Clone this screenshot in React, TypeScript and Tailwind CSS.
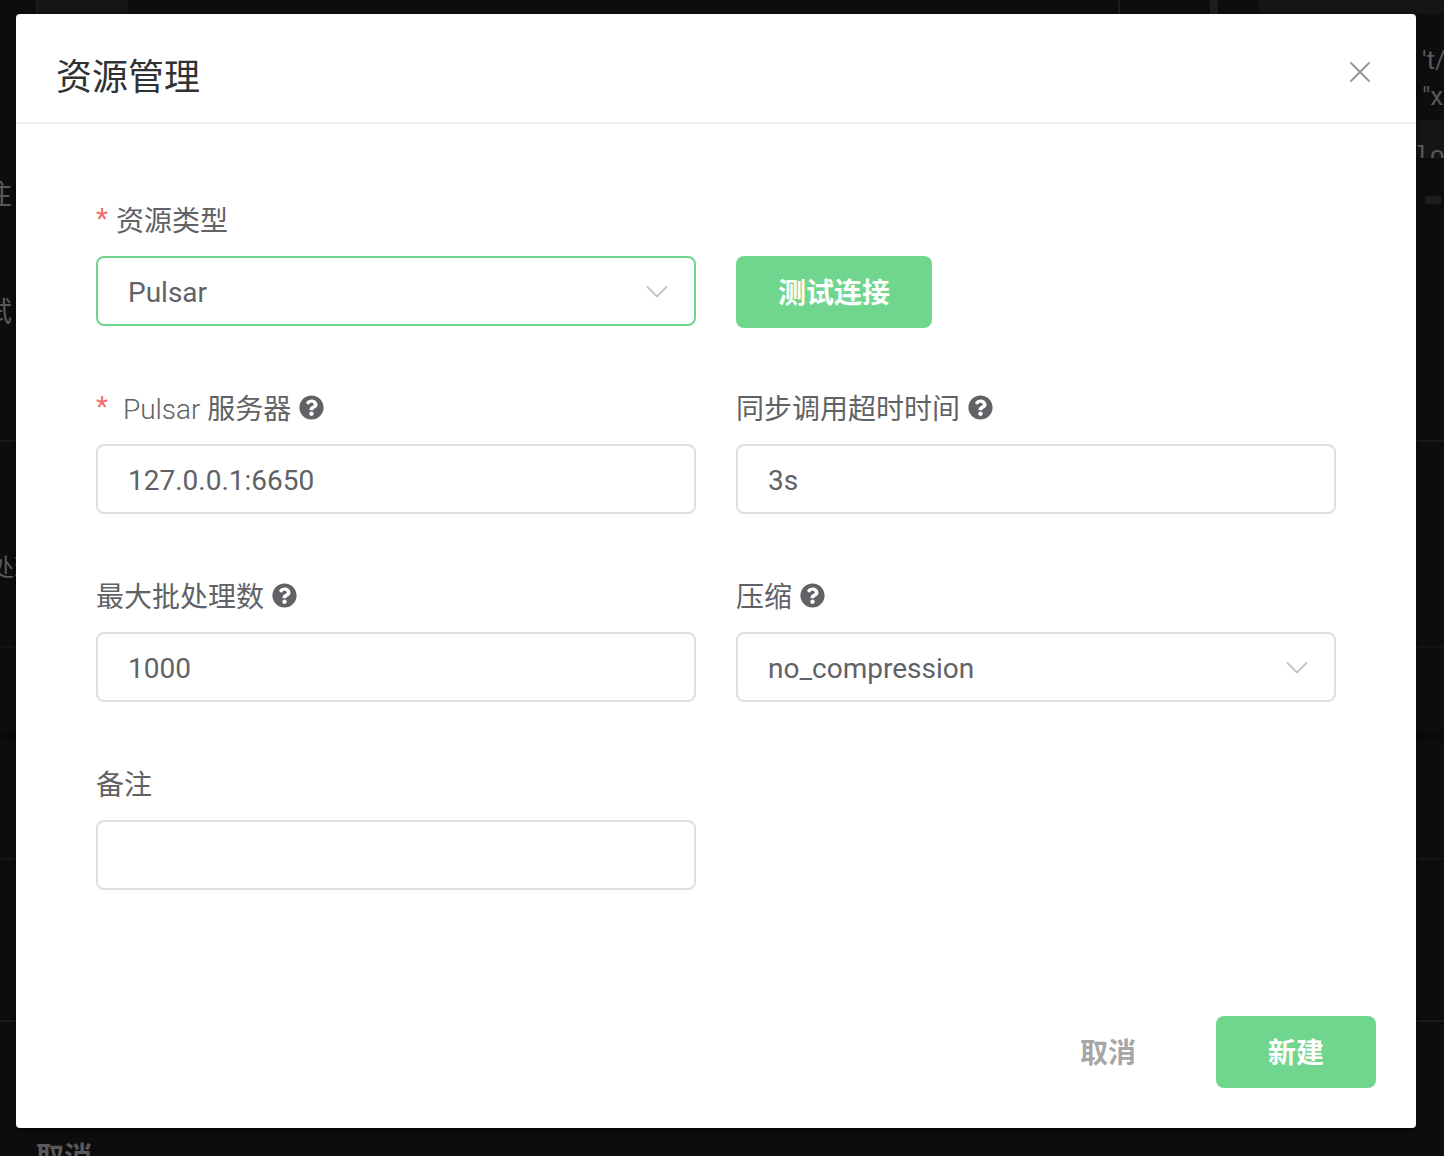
import React, { useState } from "react";
import { FaQuestionCircle } from "react-icons/fa";

const fieldStyle =
  "h-[70px] w-full appearance-none rounded-lg border-2 bg-white px-[30px] text-[28px] text-[#606266] outline-none";

type LabelProps = {
  htmlFor: string;
  required?: boolean;
  help?: boolean;
  children: React.ReactNode;
};

const Label = ({ htmlFor, required, help, children }: LabelProps) => (
  <div className="flex h-10 items-center gap-2">
    <label htmlFor={htmlFor} className="flex items-center gap-2 whitespace-pre">
      {required && <span className="pb-0.5 text-[#f56c6c]">*</span>}
      <span className="pt-1">{children}</span>
    </label>
    {help && <FaQuestionCircle className="mb-0.5" size={25} aria-hidden="true" />}
  </div>
);

type SelectProps = {
  id: string;
  options: string[];
  active?: boolean;
};

const Select = ({ id, options, active }: SelectProps) => {
  const [value, setValue] = useState(options[0]);

  return (
    <div className="relative">
      <select
        id={id}
        value={value}
        onChange={(e) => setValue(e.target.value)}
        className={`${fieldStyle} pt-1 ${active ? "border-[#71d68d]" : "border-[#dcdfe6]"}`}
      >
        {options.map((option) => (
          <option key={option}>{option}</option>
        ))}
      </select>
      <svg
        className="pointer-events-none absolute right-7 top-[30px]"
        width="22"
        height="12"
        viewBox="0 0 22 12"
        fill="none"
        aria-hidden="true"
      >
        <path
          d="M1.5 1L11 10.5L20.5 1"
          stroke="#c0c4cc"
          strokeWidth="1.8"
          strokeLinecap="round"
          strokeLinejoin="round"
        />
      </svg>
    </div>
  );
};

// Dimmed page that stays visible around the dialog
const Backdrop = () => (
  <div
    className="absolute inset-0 flex flex-col overflow-hidden text-[28px] leading-9 text-[#58595b]"
    aria-hidden="true"
  >
    <div className="flex h-[442px] shrink-0 justify-between border-b-2 border-[#1a1a1a]">
      <div className="-ml-4 flex flex-col">
        <div className="ml-[52px] h-3.5 w-[92px] border-l-2 border-[#1d1d1f] bg-[#151518]" />
        <span className="mt-[164px]">注</span>
        <span className="mt-[81px]">试</span>
      </div>
      <div className="flex">
        <div className="mr-[90px] h-3.5 w-0.5 bg-[#1d1d1f]" />
        <div className="mr-10 h-3.5 w-2 bg-[#1d1d1f]" />
        <div className="flex w-[186px] flex-col">
          <div className="h-3.5 rounded-bl-lg bg-[#151518]" />
          <span className="ml-[164px] mt-7 whitespace-nowrap text-[26px]">'t/</span>
          <span className="ml-[164px] whitespace-nowrap text-[26px]">"x"</span>
          <div className="mt-1.5 h-[38px] overflow-hidden bg-[#151518] pl-[156px] pt-[19px] font-['Liberation_Mono'] text-[26px]">
            log
          </div>
          <div className="mt-[38px] ml-[167px] h-2 w-4 bg-[#1d1d1f]" />
        </div>
      </div>
    </div>
    <div className="h-[206px] shrink-0 border-b-2 border-[#151515] pt-[107px]">
      <span className="-ml-2.5 text-2xl leading-9">处理</span>
    </div>
    <div className="h-[90px] shrink-0 border-b-4 border-[#0a0a0a]" />
    <div className="h-[122px] shrink-0 border-b-2 border-[#151515]" />
    <div className="h-[162px] shrink-0 border-b-2 border-[#1a1a1a]" />
    <div className="pl-9 pt-[118px] font-bold">取消</div>
  </div>
);

const App = () => {
  const [server, setServer] = useState("127.0.0.1:6650");
  const [timeout, setTimeoutValue] = useState("3s");
  const [batchSize, setBatchSize] = useState("1000");
  const [remark, setRemark] = useState("");

  return (
    <main className="relative min-h-screen bg-[#0d0d0d] pb-7 pl-4 pr-7 pt-3.5 font-[Roboto,'Noto_Sans_CJK_SC',sans-serif]">
      <Backdrop />
      <section
        role="dialog"
        aria-labelledby="dialog-title"
        className="relative rounded bg-white text-[28px] text-[#606266] shadow-[0_2px_6px_rgba(0,0,0,0.5)]"
      >
        <header className="flex items-center justify-between border-b-2 border-[#f0f0f0] px-10 pb-[18px] pt-[38px]">
          <h2 id="dialog-title" className="text-4xl leading-[52px] text-[#303133]">
            资源管理
          </h2>
          <button type="button" aria-label="关闭" className="mb-3 p-1.5">
            <svg width="20" height="20" viewBox="0 0 20 20" fill="none">
              <path
                d="M1 1L19 19M19 1L1 19"
                stroke="#909399"
                strokeWidth="1.8"
                strokeLinecap="round"
              />
            </svg>
          </button>
        </header>

        <form onSubmit={(e) => e.preventDefault()}>
          <div className="grid grid-cols-2 gap-x-10 gap-y-[62px] px-20 pt-[76px]">
            <div className="flex flex-col gap-4">
              <Label htmlFor="type" required>
                资源类型
              </Label>
              <Select id="type" options={["Pulsar", "Kafka", "MySQL"]} active />
            </div>
            <div className="flex h-[126px] items-start pt-14">
              <button
                type="button"
                className="h-[72px] shrink-0 rounded-lg bg-[#71d68d] px-[42px] pt-1 font-bold text-white"
              >
                测试连接
              </button>
            </div>

            <div className="flex flex-col gap-4">
              <Label htmlFor="server" required help>
                <span className="font-light"> Pulsar </span>服务器
              </Label>
              <input
                id="server"
                type="text"
                value={server}
                onChange={(e) => setServer(e.target.value)}
                className={`${fieldStyle} border-[#dcdfe6] pt-0.5`}
              />
            </div>
            <div className="flex flex-col gap-4">
              <Label htmlFor="timeout" help>
                同步调用超时时间
              </Label>
              <input
                id="timeout"
                type="text"
                value={timeout}
                onChange={(e) => setTimeoutValue(e.target.value)}
                className={`${fieldStyle} border-[#dcdfe6] pt-0.5`}
              />
            </div>

            <div className="flex flex-col gap-4">
              <Label htmlFor="batch" help>
                最大批处理数
              </Label>
              <input
                id="batch"
                type="text"
                value={batchSize}
                onChange={(e) => setBatchSize(e.target.value)}
                className={`${fieldStyle} border-[#dcdfe6] pt-0.5`}
              />
            </div>
            <div className="flex flex-col gap-4">
              <Label htmlFor="compression" help>
                压缩
              </Label>
              <Select id="compression" options={["no_compression", "zlib", "lz4"]} />
            </div>

            <div className="flex flex-col gap-4">
              <Label htmlFor="remark">备注</Label>
              <input
                id="remark"
                type="text"
                value={remark}
                onChange={(e) => setRemark(e.target.value)}
                className={`${fieldStyle} border-[#dcdfe6] pt-0.5`}
              />
            </div>
          </div>

          <footer className="flex justify-end gap-10 px-10 pb-10 pt-[126px]">
            <button type="button" className="h-[72px] px-10 pt-1 font-bold text-[#a6a6a6]">
              取消
            </button>
            <button
              type="submit"
              className="h-[72px] w-40 rounded-lg bg-[#71d68d] pt-1 font-bold text-white"
            >
              新建
            </button>
          </footer>
        </form>
      </section>
    </main>
  );
};

export default App;
